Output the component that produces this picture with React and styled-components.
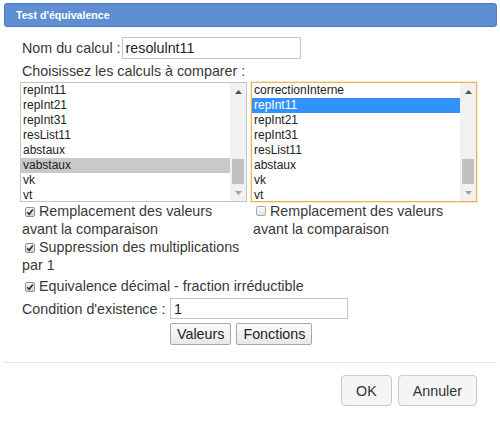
import React from 'react';
import styled, { createGlobalStyle } from 'styled-components';

const GlobalStyle = createGlobalStyle`
  body {
    margin: 0;
    background: #fff;
    font-family: "Liberation Sans", Arial, sans-serif;
    color: #383838;
  }
`;

const Dialog = styled.div`
  width: 500px;
  box-sizing: border-box;
  padding: 3px 3px 0 4px;
`;

const TitleBar = styled.div`
  height: 24px;
  box-sizing: border-box;
  display: flex;
  align-items: center;
  padding-left: 11px;
  background: #5f8fd2;
  border: 1px solid #4c7cc6;
  border-radius: 3px;
  color: #fff;
  font-size: 10.6px;
  font-weight: bold;
`;

const Body = styled.div`
  padding: 10px 20px 17px 16px;
  font-size: 14.3px;
  line-height: 18px;
`;

const FieldRow = styled.div`
  display: flex;
  align-items: center;
  gap: 1px;
  padding-left: 2px;
`;

const TextInput = styled.div`
  width: ${({ w }) => w}px;
  height: ${({ h }) => h}px;
  box-sizing: border-box;
  border: 1px solid #c6c6c6;
  padding: 0 3px;
  display: flex;
  align-items: center;
  color: #222;
  font-size: 14.3px;
`;

const Caption = styled.div`
  margin: 3px 0 2px 2px;
`;

const Columns = styled.div`
  display: grid;
  grid-template-columns: 227px 226px;
  column-gap: 4px;
`;

const Column = styled.div`
  display: flex;
  flex-direction: column;
`;

const ListBox = styled.div`
  height: 120px;
  box-sizing: border-box;
  display: flex;
  overflow: hidden;
  border: 1px solid ${({ focused }) => (focused ? '#efb24d' : '#c4c4c4')};
  box-shadow: ${({ focused }) => (focused ? '0 0 0 1px rgba(240, 190, 100, 0.35)' : 'none')};
`;

const Items = styled.div`
  flex: 1;
  overflow: hidden;
  font-size: 12px;
  line-height: 15px;
`;

const Item = styled.div`
  padding-left: 2px;
  white-space: nowrap;
  background: ${({ sel }) => (sel === 'blue' ? '#3391fb' : sel === 'gray' ? '#c9c9c9' : 'transparent')};
  color: ${({ sel }) => (sel === 'blue' ? '#fff' : '#222')};
`;

const ScrollBar = styled.div`
  width: 16px;
  display: flex;
  flex-direction: column;
  background: #f1f1f1;
`;

const Arrow = styled.div`
  height: 17px;
  display: flex;
  align-items: center;
  justify-content: center;
`;

const Track = styled.div`
  flex: 1;
  display: flex;
  flex-direction: column;
  justify-content: flex-end;
  padding: 0 2px;
`;

const Thumb = styled.div`
  height: 25px;
  background: #c1c1c1;
`;

const CheckLine = styled.div`
  margin-top: ${({ mt }) => mt || 0}px;
  padding-left: 2px;
`;

const Box = styled.span`
  display: inline-flex;
  align-items: center;
  justify-content: center;
  width: 10px;
  height: 10px;
  box-sizing: border-box;
  margin: 0 4px 0 3px;
  border: 1px solid ${({ checked }) => (checked ? '#8e8e8e' : '#a9a9a9')};
  border-radius: 2px;
  background: ${({ checked }) => (checked ? 'linear-gradient(#f2f2f2, #d6d6d6)' : 'linear-gradient(#fbfbfb, #e4e4e4)')};
`;

const ConditionGrid = styled.div`
  display: grid;
  grid-template-columns: 150px auto;
  row-gap: 4px;
  margin-top: 3px;
  align-items: center;
`;

const ConditionLabel = styled.span`
  padding-left: 2px;
`;

const Buttons = styled.div`
  grid-column: 2;
  display: flex;
  gap: 5px;
`;

const PlainButton = styled.div`
  height: 22px;
  box-sizing: border-box;
  padding: 0 6px;
  display: flex;
  align-items: center;
  border: 1px solid #a6a6a6;
  border-radius: 2px;
  background: linear-gradient(#fbfbfb, #e8e8e8);
  color: #222;
`;

const Footer = styled.div`
  border-top: 1px solid #e5e5e5;
  display: flex;
  justify-content: flex-end;
  gap: 6px;
  padding: 12px 20px 0 0;
`;

const FooterButton = styled.div`
  height: 31px;
  box-sizing: border-box;
  padding: 0 14px;
  display: flex;
  align-items: center;
  border: 1px solid #cacaca;
  border-radius: 4px;
  background: #f5f5f5;
  color: #333;
  font-size: 14.3px;
`;

const UpArrow = ({ color }) => (
  <svg width="7" height="4" viewBox="0 0 7 4">
    <path d="M0 4 L3.5 0 L7 4 Z" fill={color} />
  </svg>
);

const DownArrow = ({ color }) => (
  <svg width="7" height="4" viewBox="0 0 7 4">
    <path d="M0 0 L3.5 4 L7 0 Z" fill={color} />
  </svg>
);

const Check = ({ checked, children, mt }) => (
  <CheckLine mt={mt}>
    <Box checked={checked}>
      {checked && (
        <svg width="8" height="8" viewBox="0 0 8 8">
          <path d="M1.2 4.2 L3.2 6.2 L6.8 1.6" stroke="#2b2b2b" strokeWidth="1.6" fill="none" />
        </svg>
      )}
    </Box>
    {children}
  </CheckLine>
);

const List = ({ items, selected, tone, focused }) => (
  <ListBox focused={focused}>
    <Items>
      {items.map((name) => (
        <Item key={name} sel={name === selected ? tone : null}>{name}</Item>
      ))}
    </Items>
    <ScrollBar>
      <Arrow><UpArrow color="#505050" /></Arrow>
      <Track><Thumb /></Track>
      <Arrow><DownArrow color="#a3a3a3" /></Arrow>
    </ScrollBar>
  </ListBox>
);

const leftItems = ['repInt11', 'repInt21', 'repInt31', 'resList11', 'abstaux', 'vabstaux', 'vk', 'vt'];
const rightItems = ['correctionInterne', 'repInt11', 'repInt21', 'repInt31', 'resList11', 'abstaux', 'vk', 'vt'];

export default function App() {
  return (
    <>
      <GlobalStyle />
      <Dialog>
        <TitleBar>Test d'équivalence</TitleBar>
        <Body>
          <FieldRow>
            <span>Nom du calcul :</span>
            <TextInput w={179} h={22}>resolulnt11</TextInput>
          </FieldRow>
          <Caption>Choisissez les calculs à comparer :</Caption>
          <Columns>
            <Column>
              <List items={leftItems} selected="vabstaux" tone="gray" />
              <Check checked>Remplacement des valeurs<br />avant la comparaison</Check>
              <Check checked>Suppression des multiplications<br />par 1</Check>
            </Column>
            <Column>
              <List items={rightItems} selected="repInt11" tone="blue" focused />
              <Check>Remplacement des valeurs<br />avant la comparaison</Check>
            </Column>
          </Columns>
          <Check checked mt={3}>Equivalence décimal - fraction irréductible</Check>
          <ConditionGrid>
            <ConditionLabel>Condition d'existence :</ConditionLabel>
            <TextInput w={178} h={21}>1</TextInput>
            <Buttons>
              <PlainButton>Valeurs</PlainButton>
              <PlainButton>Fonctions</PlainButton>
            </Buttons>
          </ConditionGrid>
        </Body>
        <Footer>
          <FooterButton>OK</FooterButton>
          <FooterButton>Annuler</FooterButton>
        </Footer>
      </Dialog>
    </>
  );
}
